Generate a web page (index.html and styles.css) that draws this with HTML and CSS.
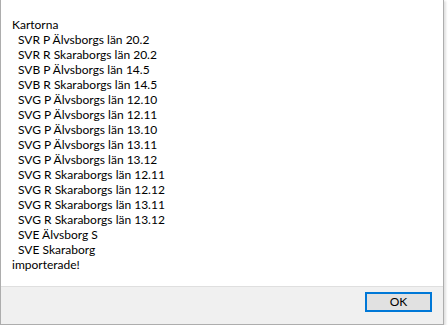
FILE: index.html
```html
<!DOCTYPE html>
<html lang="sv">
<head>
  <meta charset="UTF-8" />
  <title>Import</title>
  <link rel="stylesheet" href="styles.css">
</head>
<body>
  <div class="dialog">
    <div class="message">
      <p class="line">Kartorna</p>
      <p class="line item">SVR P Älvsborgs län 20.2</p>
      <p class="line item">SVR R Skaraborgs län 20.2</p>
      <p class="line item">SVB P Älvsborgs län 14.5</p>
      <p class="line item">SVB R Skaraborgs län 14.5</p>
      <p class="line item">SVG P Älvsborgs län 12.10</p>
      <p class="line item">SVG P Älvsborgs län 12.11</p>
      <p class="line item">SVG P Älvsborgs län 13.10</p>
      <p class="line item">SVG P Älvsborgs län 13.11</p>
      <p class="line item">SVG P Älvsborgs län 13.12</p>
      <p class="line item">SVG R Skaraborgs län 12.11</p>
      <p class="line item">SVG R Skaraborgs län 12.12</p>
      <p class="line item">SVG R Skaraborgs län 13.11</p>
      <p class="line item">SVG R Skaraborgs län 13.12</p>
      <p class="line item">SVE Älvsborg S</p>
      <p class="line item">SVE Skaraborg</p>
      <p class="line">importerade!</p>
    </div>
    <div class="footer">
      <button class="ok">OK</button>
    </div>
  </div>
</body>
</html>
```

FILE: styles.css
```css
body {
  margin: 0;
  background: #fff;
  font-family: Lato, 'Noto Sans', sans-serif;
  font-size: 12px;
  color: #000;
}

.dialog {
  width: 442px;
  height: 324px;
  border-left: 1px solid #adadad;
  border-right: 1px solid #adadad;
  border-bottom: 1px solid #adadad;
  box-shadow: 2px 1px 2px rgba(0, 0, 0, 0.12);
  display: flex;
  flex-direction: column;
}

/* white message area */
.message {
  background: #fff;
  padding: 17px 0 0 11px;
  height: 269px;
  border-bottom: 1px solid #dfdfdf;
}

.line {
  margin: 0;
  line-height: 15px;
  white-space: pre;
}

.item {
  padding-left: 6px;
}

.footer {
  flex: 1;
  background: #f0f0f0;
  display: flex;
  justify-content: flex-end;
  align-items: flex-start;
  padding: 5px 11px 0 0;
}

.ok {
  width: 67px;
  height: 20px;
  margin: 0;
  padding: 0;
  background: #e1e1e1;
  border: 2px solid #0078d7;
  font-family: Lato, 'Noto Sans', sans-serif;
  font-size: 12px;
  color: #000;
  line-height: 14px;
}
```
